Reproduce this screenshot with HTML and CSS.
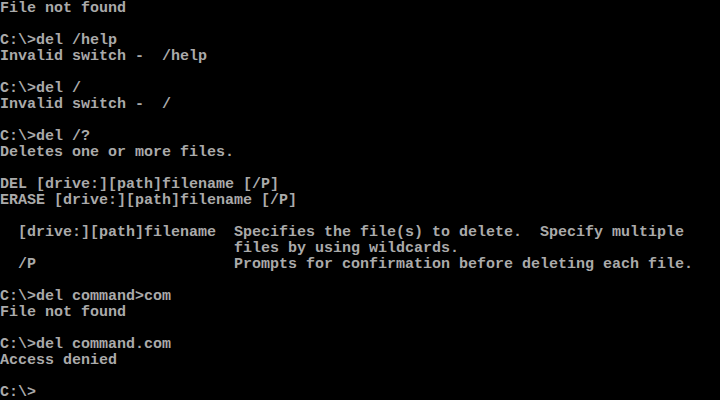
FILE: index.html
```html
<!DOCTYPE html>
<html>
<head>
<meta charset="utf-8">
<link rel="stylesheet" href="styles.css">
</head>
<body>
<pre class="screen">File not found

C:\&gt;del /help
Invalid switch -  /help

C:\&gt;del /
Invalid switch -  /

C:\&gt;del /?
Deletes one or more files.

DEL [drive:][path]filename [/P]
ERASE [drive:][path]filename [/P]

  [drive:][path]filename  Specifies the file(s) to delete.  Specify multiple
                          files by using wildcards.
  /P                      Prompts for confirmation before deleting each file.

C:\&gt;del command&gt;com
File not found

C:\&gt;del command.com
Access denied

C:\&gt;</pre>
</body>
</html>
```
FILE: styles.css
```css
html, body {
  margin: 0;
  padding: 0;
  background: #000;
  width: 720px;
  height: 400px;
  overflow: hidden;
}
.screen {
  margin: 0;
  padding: 1px 0 0 0;
  font-family: "Liberation Mono", "DejaVu Sans Mono", monospace;
  font-size: 15px;
  line-height: 16px;
  font-weight: bold;
  color: #aaaaaa;
  white-space: pre;
}
```
